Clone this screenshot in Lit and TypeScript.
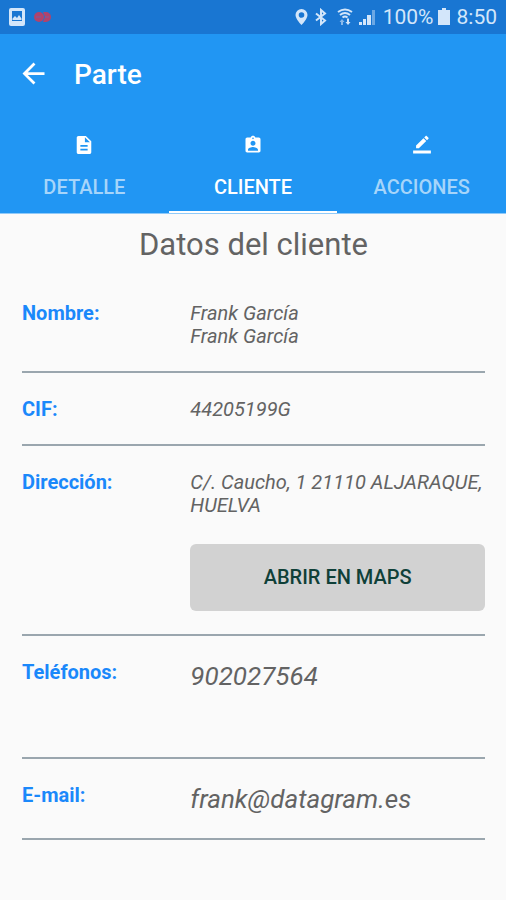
import { LitElement, html, css, svg } from "lit";
import { customElement, state } from "lit/decorators.js";
import { classMap } from "lit/directives/class-map.js";

const tabs = [
  {
    id: "detalle",
    label: "DETALLE",
    viewBox: "1 1 22 22",
    icon: svg`<path d="M14 2H6c-1.100 0-2 .9-2 2v16c0 1.100.9 2 2 2h12c1.100 0 2-.9 2-2V8l-6-6zm2 16H8v-2h8v2zm0-4H8v-2h8v2zm-3-5V3.500L18.500 9H13z"/>`,
  },
  {
    id: "cliente",
    label: "CLIENTE",
    viewBox: "0 0 24 24",
    icon: svg`<path d="M19 3h-4.180C14.400 1.840 13.300 1 12 1s-2.400.84-2.820 2H5c-1.100 0-2 .9-2 2v14c0 1.100.9 2 2 2h14c1.100 0 2-.9 2-2V5c0-1.100-.9-2-2-2zm-7 0c.55 0 1 .45 1 1s-.45 1-1 1-1-.45-1-1 .45-1 1-1zm0 4c1.660 0 3 1.340 3 3s-1.340 3-3 3-3-1.340-3-3 1.340-3 3-3zm6 12H6v-1.400c0-2 4-3.100 6-3.100s6 1.100 6 3.100V19z"/>`,
  },
  {
    id: "acciones",
    label: "ACCIONES",
    viewBox: "-1.5 -1 27 27",
    icon: svg`<path d="M17.750 7 14 3.250l-10 10V17h3.750l10-10zm2.960-2.960c.39-.39.39-1.020 0-1.410L18.370.29c-.39-.39-1.020-.39-1.410 0L15 2.250 18.750 6l1.960-1.960zM0 20h24v4H0z"/>`,
  },
];

@customElement("status-bar")
class StatusBar extends LitElement {
  static styles = css`
    :host {
      display: flex;
      align-items: center;
      height: 34px;
      padding: 0 9px 0 8px;
      background: #1976d2;
      color: #d3e6fa;
      font-size: 21px;
      line-height: 24px;
    }
    svg {
      display: block;
      fill: currentColor;
    }
    .alert {
      margin-left: 8px;
    }
    .system {
      display: flex;
      align-items: center;
      margin-left: auto;
    }
    .bluetooth {
      margin-left: 6px;
    }
    .wifi {
      margin-left: 8px;
    }
    .signal {
      margin: 0 7px 0 4px;
    }
    .battery {
      margin: 0 7px 0 4px;
    }
  `;

  render() {
    return html`
      <svg width="18" height="18" viewBox="0 0 18 18" aria-hidden="true">
        <path fill-rule="evenodd" d="M3 0h12q2 0 2 2v14q0 2-2 2H3q-2 0-2-2V2q0-2 2-2zM4 3v10h10V3z" />
        <path d="M4.500 12v-1.500L7 8l2 2 2-3 2.500 3.500V12z" />
      </svg>
      <svg class="alert" width="18" height="12" viewBox="0 0 18 12" aria-hidden="true">
        <g fill="#b0436c">
          <circle cx="5" cy="6" r="5" />
          <path d="M9 1h3a5 5 0 0 1 0 10H9l2-5z" />
        </g>
        <path d="M2 6h5M11 6h4" stroke="#7a5ca0" stroke-width="1" />
      </svg>
      <div class="system">
        <svg width="13" height="18" viewBox="0 0 13 18" aria-hidden="true">
          <path fill-rule="evenodd" d="M6.500 1A6 6 0 0 0 .5 7c0 4 6 10 6 10s6-6 6-10a6 6 0 0 0-6-6zm0 3.200a2.800 2.800 0 1 1 0 5.600 2.800 2.800 0 0 1 0-5.600z" />
        </svg>
        <svg class="bluetooth" width="14" height="18" viewBox="0 0 14 18" aria-hidden="true">
          <path d="M2 5.500l9 7L7 16V2l4 3.500-9 7" fill="none" stroke="currentColor" stroke-width="2" />
        </svg>
        <svg class="wifi" width="18" height="18" viewBox="0 0 18 18" aria-hidden="true">
          <path d="M2 4q7-5 14 0M4 7q5-4 10 0M6.500 9.500q2.500-2 5 0" fill="none" stroke="currentColor" stroke-width="2" />
          <path d="M5 17v-3H3.500L6 11l2.500 3H7v3z" opacity=".6" />
          <path d="M11 10.500v3.500H9.500l2.500 3 2.500-3H13v-3.500z" />
        </svg>
        <svg class="signal" width="18" height="18" viewBox="0 0 18 18" aria-hidden="true">
          <path d="M1 14h3v3H1zM5 11h3v6H5zM9 7h4v10H9z" />
          <path d="M14 2h3v15h-3z" opacity=".45" />
        </svg>
        <span>100%</span>
        <svg class="battery" width="12" height="18" viewBox="0 0 12 18" aria-hidden="true">
          <path d="M4 0h4v2h4v15H0V2h4z" />
        </svg>
        <span>8:50</span>
      </div>
    `;
  }
}

@customElement("data-row")
class DataRow extends LitElement {
  static properties = { label: { type: String } };
  declare label: string;

  static styles = css`
    :host {
      display: grid;
      grid-template-columns: 4fr 7fr;
      padding: 25px 0 23px;
      border-bottom: 2px solid #9aa6ae;
      line-height: 23px;
    }
    .label {
      color: #1a88fa;
      font-weight: 700;
    }
    .value {
      color: #636363;
      font-style: italic;
    }
  `;

  render() {
    return html`
      <span class="label" id="label">${this.label}</span>
      <div class="value" role="group" aria-labelledby="label"><slot></slot></div>
    `;
  }
}

@customElement("app-root")
class AppRoot extends LitElement {
  @state() private active = "cliente";

  static styles = css`
    :host {
      display: block;
      min-height: 100vh;
      background: #fafafa;
      font-family: Roboto, "Liberation Sans", sans-serif;
      font-size: 20px;
    }
    button {
      border: 0;
      font: inherit;
      cursor: pointer;
    }
    svg {
      display: block;
      fill: #fff;
    }
    .header {
      background: #2196f3;
      border-bottom: 1px solid #90caf9;
    }
    .toolbar {
      display: flex;
      align-items: center;
      gap: 24px;
      height: 79px;
      padding: 0 17px;
    }
    .back {
      padding: 0;
      background: none;
    }
    .title {
      margin: 0;
      padding-top: 3px;
      color: #fff;
      font-size: 28px;
      line-height: 32px;
      font-weight: 500;
    }
    .tabs {
      display: grid;
      grid-template-columns: repeat(3, 1fr);
    }
    .tab {
      display: flex;
      flex-direction: column;
      align-items: center;
      gap: 20px;
      padding: 22px 0 12px;
      border-bottom: 2px solid transparent;
      background: none;
      color: #a6d5fa;
      line-height: 24px;
      font-weight: 500;
    }
    .tab.active {
      border-bottom-color: #fff;
      color: #fff;
    }
    .content {
      padding: 0 21px 24px 22px;
    }
    .heading {
      margin: 0;
      padding: 11px 0 12px;
      color: #636363;
      font-size: 31px;
      line-height: 40px;
      font-weight: 400;
      text-align: center;
    }
    .maps {
      display: block;
      width: 100%;
      height: 67px;
      margin-top: 27px;
      border-radius: 6px;
      background: #d2d2d2;
      color: #0f4038;
      font-style: normal;
      font-weight: 500;
    }
    .large {
      color: inherit;
      font-size: 26px;
      line-height: 31px;
      text-decoration: none;
    }
    .phones {
      display: flex;
      min-height: 73px;
    }
  `;

  render() {
    return html`
      <status-bar></status-bar>
      <header class="header">
        <div class="toolbar">
          <button class="back" aria-label="Atrás">
            <svg width="33" height="33" viewBox="0 0 24 24">
              <path d="M20 11H7.830l5.590-5.590L12 4l-8 8 8 8 1.410-1.410L7.830 13H20v-2z" />
            </svg>
          </button>
          <h1 class="title">Parte</h1>
        </div>
        <div class="tabs" role="tablist">
          ${tabs.map(
            (tab) => html`
              <button
                class=${classMap({ tab: true, active: tab.id === this.active })}
                role="tab"
                aria-selected=${tab.id === this.active ? "true" : "false"}
                @click=${() => (this.active = tab.id)}
              >
                <svg width="20" height="20" viewBox=${tab.viewBox} aria-hidden="true">${tab.icon}</svg>
                <span>${tab.label}</span>
              </button>
            `
          )}
        </div>
      </header>
      <main class="content">
        <h2 class="heading">Datos del cliente</h2>
        <data-row label="Nombre:">Frank García<br />Frank García</data-row>
        <data-row label="CIF:">44205199G</data-row>
        <data-row label="Dirección:">
          C/. Caucho, 1 21110 ALJARAQUE, HUELVA
          <button class="maps">ABRIR EN MAPS</button>
        </data-row>
        <data-row label="Teléfonos:">
          <div class="phones"><a class="large" href="tel:902027564">902027564</a></div>
        </data-row>
        <data-row label="E-mail:">
          <a class="large" href="mailto:frank@datagram.es">frank@datagram.es</a>
        </data-row>
      </main>
    `;
  }
}
